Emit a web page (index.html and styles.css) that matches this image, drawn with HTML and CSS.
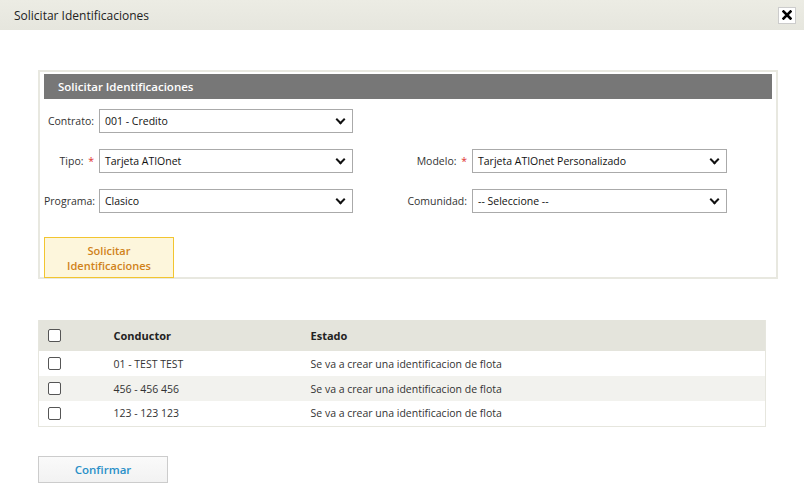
FILE: index.html
```html
<!DOCTYPE html>
<html lang="es">
<head>
<meta charset="utf-8">
<title>Solicitar Identificaciones</title>
<link rel="stylesheet" href="styles.css">
</head>
<body>
<div class="dialog">
  <div class="titlebar">
    <span class="title">Solicitar Identificaciones</span>
    <button class="close" type="button" aria-label="Cerrar">
      <svg width="10" height="10" viewBox="0 0 10 10"><path d="M1.5 1.5 L8.5 8.5 M8.5 1.5 L1.5 8.5" stroke="#000" stroke-width="2.6" stroke-linecap="square"/></svg>
    </button>
  </div>
  <div class="content">
    <div class="panel">
      <div class="panel-head">Solicitar Identificaciones</div>
      <div class="form">
        <label class="lbl">Contrato:</label>
        <div class="sel"><span>001 - Credito</span><i class="chev"></i></div>
        <span></span><span></span>

        <label class="lbl">Tipo: <b class="req">*</b></label>
        <div class="sel"><span>Tarjeta ATIOnet</span><i class="chev"></i></div>
        <label class="lbl">Modelo: <b class="req">*</b></label>
        <div class="sel"><span>Tarjeta ATIOnet Personalizado</span><i class="chev"></i></div>

        <label class="lbl">Programa:</label>
        <div class="sel"><span>Clasico</span><i class="chev"></i></div>
        <label class="lbl">Comunidad:</label>
        <div class="sel"><span>-- Seleccione --</span><i class="chev"></i></div>
      </div>
      <button class="btn-req" type="button">Solicitar<br>Identificaciones</button>
    </div>

    <table class="grid">
      <thead>
        <tr><th class="c-chk"><span class="cb"></span></th><th class="c-cond">Conductor</th><th>Estado</th></tr>
      </thead>
      <tbody>
        <tr><td class="c-chk"><span class="cb"></span></td><td class="c-cond">01 - TEST TEST</td><td>Se va a crear una identificacion de flota</td></tr>
        <tr class="alt"><td class="c-chk"><span class="cb"></span></td><td class="c-cond">456 - 456 456</td><td>Se va a crear una identificacion de flota</td></tr>
        <tr><td class="c-chk"><span class="cb"></span></td><td class="c-cond">123 - 123 123</td><td>Se va a crear una identificacion de flota</td></tr>
      </tbody>
    </table>

    <button class="btn-ok" type="button">Confirmar</button>
  </div>
</div>
</body>
</html>
```
FILE: styles.css
```css
* { box-sizing: border-box; }
html, body { margin: 0; padding: 0; background: #fff; }
body {
  font-family: "Open Sans", "Noto Sans", "Liberation Sans", sans-serif;
  font-size: 10.5px;
  color: #222;
  width: 804px;
  height: 488px;
  overflow: hidden;
}
.titlebar {
  height: 30px;
  background: linear-gradient(#ecece4, #e6e6de);
  display: flex;
  align-items: center;
  justify-content: space-between;
  padding: 0 8px 0 14px;
}
.title { font-size: 12px; color: #222; }
.close {
  width: 18px; height: 17px;
  background: #fff;
  border: 1px solid #ccc;
  padding: 0;
  display: flex; align-items: center; justify-content: center;
}
.content { padding: 40px 0 0 38px; }
.panel {
  width: 740px;
  height: 209px;
  border: 2px solid #e8e8e0;
  padding: 2px 4px 0 4px;
}
.panel-head {
  background: #777;
  color: #fff;
  font-weight: 600;
  font-size: 11.5px;
  height: 25px;
  line-height: 25px;
  padding-left: 14px;
}
.form {
  display: grid;
  grid-template-columns: 55px 254px 119px 255px;
  grid-auto-rows: 24px;
  row-gap: 16px;
  margin-top: 10px;
  align-items: center;
}
.lbl { text-align: right; padding-right: 5px; color: #333; white-space: nowrap; }
.req { color: #e03030; font-weight: normal; margin-left: 2px; }
.sel {
  height: 24px;
  border: 1px solid #aaa;
  display: flex;
  align-items: center;
  justify-content: space-between;
  padding: 0 6px 0 5px;
  color: #111;
  background: #fff;
}
.chev {
  width: 7px; height: 7px;
  border-right: 2px solid #111;
  border-bottom: 2px solid #111;
  transform: translateY(-2px) rotate(45deg);
  margin-right: 2px;
}
.btn-req {
  margin-top: 24px;
  width: 130px;
  height: 41px;
  background: #fdf6dc;
  border: 1px solid #f2c530;
  color: #d0821a;
  font-family: inherit;
  font-size: 11px;
  font-weight: 600;
  line-height: 15px;
  padding: 0;
}
.grid {
  margin-top: 41px;
  width: 728px;
  border-collapse: collapse;
  border: 1px solid #e6e6de;
  border-top: none;
}
.grid th {
  background: #e4e4dc;
  height: 31px;
  text-align: left;
  font-weight: bold;
  font-size: 11px;
  color: #222;
}
.grid td { height: 25px; color: #333; }
.grid tr.alt td { background: #f2f2ee; }
.c-chk { width: 74px; padding-left: 9px; }
.c-cond { width: 197px; }
.cb {
  display: block;
  width: 13px; height: 13px;
  border: 1px solid #555;
  border-radius: 2px;
  background: #fff;
}
.btn-ok {
  margin-top: 29px;
  width: 130px;
  height: 27px;
  background: linear-gradient(#fafafa, #f2f2f2);
  border: 1px solid #ccc;
  color: #2a90c8;
  font-family: inherit;
  font-size: 11.5px;
  font-weight: 600;
  padding: 0;
}
```
